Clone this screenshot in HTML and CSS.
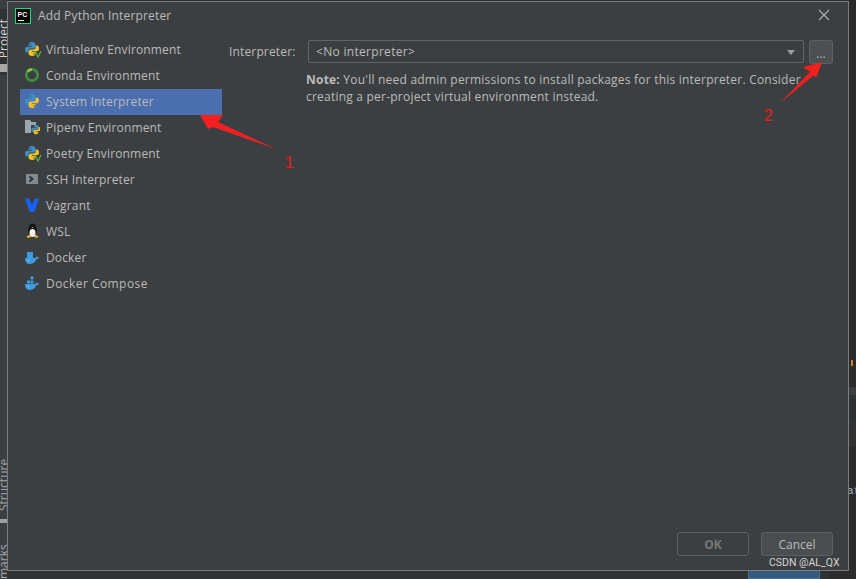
FILE: index.html
```html
<!DOCTYPE html>
<html lang="en">
<head>
<meta charset="utf-8">
<title>Add Python Interpreter</title>
<link rel="stylesheet" href="styles.css">
</head>
<body>
<svg class="defs" width="0" height="0" aria-hidden="true">
  <defs>
    <symbol id="py" viewBox="0 0 16 16">
      <path fill="#3d8fc9" d="M7.800 1C5 1 4.600 2 4.600 3.200V5h3.600v.7H3C1.600 5.700 1 6.900 1 8.500s.7 3 2 3h1.300V9.800c0-1.300 1-2.200 2.300-2.200h3c1 0 1.800-.8 1.800-1.800V3.200C11.400 1.900 10.200 1 7.800 1z"/>
      <circle cx="6" cy="3" r=".7" fill="#2b2b2b"/>
      <path fill="#f2c029" d="M8.200 15c2.800 0 3.200-1 3.200-2.200V11H7.800v-.7H13c1.400 0 2-1.200 2-2.800s-.7-3-2-3h-1.300v1.700c0 1.300-1 2.200-2.300 2.200h-3c-1 0-1.800.8-1.800 1.800v2.600C4.600 14.100 5.800 15 8.200 15z"/>
      <circle cx="10" cy="13" r=".7" fill="#3c3f41"/>
    </symbol>
    <symbol id="whale" viewBox="0 0 16 16">
      <path fill="#3d9be0" d="M1 9h10.500c.3-1 1-1.500 1.700-1.500.2.500.5.800 1.800 1-.4 1-1.400 1.500-2.400 1.600C11.300 13.300 9 15 5.800 15 2.500 15 1 12.500 1 9z"/>
      <circle cx="4.500" cy="11.500" r=".6" fill="#d5e8f5"/>
    </symbol>
  </defs>
</svg>

<div class="screen">
  <aside class="tool-strip">
    <div class="strip-top"></div>
    <div class="strip-dark">
      <span class="side-label">Project</span>
      <span class="strip-folder"></span>
    </div>
    <div class="strip-fill">
      <span class="side-label structure">Structure</span>
      <span class="strip-mark"></span>
      <span class="side-label marks">marks</span>
    </div>
  </aside>

  <div class="middle">
    <section class="dialog">
      <header class="title-bar">
        <svg class="pc-logo" viewBox="0 0 16 16" width="16" height="16" aria-hidden="true">
          <rect x=".5" y=".5" width="15" height="15" fill="#000" stroke="#21d789"/>
          <text x="2.500" y="9" class="pc-text">PC</text>
          <rect x="3" y="12" width="6" height="1" fill="#fff"/>
        </svg>
        <span class="title">Add Python Interpreter</span>
        <svg class="close" viewBox="0 0 12 12" width="12" height="12" aria-hidden="true">
          <path d="M1 1l10 10M11 1L1 11" stroke="#afb1b3" stroke-width="1.100" fill="none"/>
        </svg>
      </header>

      <div class="body">
        <ul class="env-list">
          <li class="env">
            <svg class="icon" width="16" height="16"><use href="#py"/></svg>
            <svg class="badge-v" viewBox="0 0 8 8" width="8" height="8"><path d="M1 1l3 6 3-6" fill="none" stroke="#62b543" stroke-width="1.200"/></svg>
            Virtualenv Environment
          </li>
          <li class="env">
            <svg class="icon" viewBox="0 0 16 16" width="16" height="16"><circle cx="8" cy="8" r="5.700" fill="none" stroke="#3f8f43" stroke-width="2.700"/><path d="M3.500 4.500A5.700 5.700 0 0 1 8 2.300" fill="none" stroke="#8bc34a" stroke-width="2.700"/></svg>
            Conda Environment
          </li>
          <li class="env selected">
            <svg class="icon" width="16" height="16"><use href="#py"/></svg>
            System Interpreter
          </li>
          <li class="env">
            <svg class="icon" viewBox="0 0 16 16" width="16" height="16">
              <path fill="#9aa7b0" d="M1 1h5l1.500 2H12v3H7v8H1z"/>
              <svg x="6.500" y="5" width="11" height="11"><use href="#py"/></svg>
            </svg>
            Pipenv Environment
          </li>
          <li class="env">
            <svg class="icon" width="16" height="16"><use href="#py"/></svg>
            <svg class="badge-v" viewBox="0 0 8 8" width="8" height="8"><path d="M1 1l3 6 3-6" fill="none" stroke="#62b543" stroke-width="1.200"/></svg>
            Poetry Environment
          </li>
          <li class="env">
            <svg class="icon" viewBox="0 0 16 16" width="16" height="16"><rect x="2" y="3" width="12" height="10" fill="#7f8b91"/><path d="M5.500 5.500L8.500 8l-3 2.500" fill="none" stroke="#2b2d2e" stroke-width="1.800"/></svg>
            SSH Interpreter
          </li>
          <li class="env">
            <svg class="icon" viewBox="0 0 16 16" width="16" height="16"><path fill="#1563ff" d="M1 2L4.800 1 8 8.500 11.200 1 15 2l-5 13H6z"/></svg>
            Vagrant
          </li>
          <li class="env">
            <svg class="icon" viewBox="0 0 16 16" width="16" height="16">
              <ellipse cx="8.500" cy="7.500" rx="4.200" ry="7" fill="#141414"/>
              <ellipse cx="8.500" cy="10" rx="3" ry="4" fill="#f4f4f4"/>
              <path fill="#f0b020" d="M7.500 4h2l-1 1.200zM2.500 13.500l3.500-2 1 2.500-3 1zM14.500 13.500l-3.500-2-1 2.500 3 1z"/>
            </svg>
            WSL
          </li>
          <li class="env">
            <svg class="icon" viewBox="0 0 16 16" width="16" height="16">
              <use href="#whale"/>
              <rect x="3" y="3" width="6" height="6" fill="#3d9be0"/>
            </svg>
            Docker
          </li>
          <li class="env wide">
            <svg class="icon" viewBox="0 0 16 16" width="16" height="16">
              <use href="#whale"/>
              <path fill="#3d9be0" d="M6.500 1.500h3v3h-3zM3 5.500h3v3H3zM6.500 5.500h3v3h-3z"/>
            </svg>
            Docker Compose
          </li>
        </ul>

        <div class="panel">
          <div class="field-row">
            <label class="field-label">Interpreter:</label>
            <div class="combo">
              <span>&lt;No interpreter&gt;</span>
              <span class="caret"></span>
            </div>
            <button class="more" type="button">...</button>
          </div>
          <p class="note"><b>Note:</b> You'll need admin permissions to install packages for this interpreter. Consider creating a per-project virtual environment instead.</p>
        </div>
      </div>

      <footer class="actions">
        <button class="btn disabled" type="button">OK</button>
        <button class="btn" type="button">Cancel</button>
      </footer>
    </section>
    <div class="under">
      <span class="under-btn"></span>
    </div>
  </div>

  <aside class="right-strip">
    <span class="r-tick"></span>
    <span class="r-band one"></span>
    <span class="r-band two"></span>
    <span class="r-band three"></span>
    <span class="r-code"><i>a</i><u>t</u></span>
  </aside>

  <svg class="annotations" viewBox="0 0 856 579" width="856" height="579" aria-hidden="true">
    <polygon fill="#f41f1f" points="200,115 223,115 218,122 276,149 213,127 208,129"/>
    <polygon fill="#f41f1f" points="822,62 803,67 810,72 780,103 814,75 816,78"/>
  </svg>
  <span class="mark-num n1">1</span>
  <span class="mark-num n2">2</span>
  <span class="watermark">CSDN @AL_QX</span>
</div>
</body>
</html>
```
FILE: styles.css
```css
* { box-sizing: border-box; }
html, body { margin: 0; padding: 0; }
body {
  width: 856px;
  height: 579px;
  overflow: hidden;
  background: #2b2b2b;
  font-family: "Open Sans", "Noto Sans", sans-serif;
  font-size: 12px;
  color: #bbbbbb;
}
.defs { position: absolute; }
.screen {
  position: relative;
  display: flex;
  width: 856px;
  height: 579px;
  overflow: hidden;
}

/* left tool window strip */
.tool-strip {
  flex: 0 0 7px;
  display: flex;
  flex-direction: column;
  overflow: hidden;
}
.strip-top { height: 10px; background: #3c3f41; }
.strip-dark {
  height: 72px;
  background: #2f3133;
  padding-top: 10px;
  position: relative;
}
.strip-fill {
  flex: 1;
  background: #3c3f41;
  padding-top: 384px;
  display: flex;
  flex-direction: column;
}
.side-label {
  display: block;
  writing-mode: vertical-rl;
  transform: rotate(180deg);
  font-size: 12px;
  line-height: 14px;
  width: 14px;
  margin-left: -3px;
  white-space: nowrap;
  color: #d5d5d5;
}
.structure { color: #a0a4a7; height: 52px; flex: none; }
.marks { color: #a0a4a7; height: 38px; flex: none; margin-top: 18px; }
.strip-folder {
  display: block;
  width: 7px;
  height: 8px;
  margin-top: 6px;
  background: #a7a7a7;
}
.strip-mark {
  display: block;
  flex: none;
  width: 7px;
  height: 4px;
  margin-top: 8px;
  background: #a0a0a0;
}

.middle {
  flex: 0 0 842px;
  display: flex;
  flex-direction: column;
}
.dialog {
  height: 571px;
  margin-top: 1px;
  background: #3c3f41;
  border: 1px solid #7b7d7f;
  display: flex;
  flex-direction: column;
}
.under {
  flex: 1;
  background: linear-gradient(90deg, #303234 822px, #2b2b2b 822px);
  padding-left: 741px;
}
.under-btn {
  display: block;
  width: 72px;
  height: 8px;
  background: #365880;
  border: 1px solid #4c708c;
  border-top: 0;
}

/* title */
.title-bar {
  flex: 0 0 28px;
  display: flex;
  align-items: center;
  padding: 0 18px 0 7px;
}
.pc-logo { flex: none; }
.pc-text { font: 700 7px "Liberation Sans", sans-serif; fill: #fff; }
.title { margin-left: 7px; padding-bottom: 2px; font-size: 12px; letter-spacing: .18px; flex: 1; }
.close { margin-top: -2px; }

/* body */
.body { flex: 1; display: flex; padding: 7px 15px 0 12px; }
.env-list {
  flex: 0 0 202px;
  list-style: none;
  margin: 0;
  padding: 0;
}
.env {
  position: relative;
  height: 26px;
  display: flex;
  align-items: center;
  gap: 6px;
  padding: 0 0 2px 4px;
  letter-spacing: .15px;
  white-space: nowrap;
}
.env.wide { letter-spacing: .45px; }
.env.selected { background: #4b6eaf; }
.icon { flex: none; }
.badge-v { position: absolute; left: 14px; top: 13px; }

.panel { flex: 1; padding: 3px 0 0 7px; min-width: 0; }
.field-row { display: flex; align-items: center; height: 23px; }
.field-label { flex: 0 0 79px; letter-spacing: .15px; }
.combo {
  flex: 1;
  height: 23px;
  display: flex;
  align-items: center;
  justify-content: space-between;
  padding: 0 7px 0 7px;
  border: 1px solid #646464;
  border-radius: 2px;
  background: #3c3f41;
  letter-spacing: .3px;
}
.caret {
  width: 0;
  height: 0;
  margin: 1px 1px 0 0;
  border-left: 4.500px solid transparent;
  border-right: 4.500px solid transparent;
  border-top: 5px solid #9b9d9f;
}
.more {
  flex: 0 0 24px;
  height: 24px;
  margin-left: 5px;
  padding: 4px 0 0;
  border: 1px solid #5e6060;
  border-radius: 3px;
  background: #4c5052;
  color: #bbbbbb;
  font: 12px "Open Sans", sans-serif;
}
.note {
  margin: 8px 0 0 77px;
  width: 515px;
  line-height: 17px;
  letter-spacing: .22px;
}
.note b { font-weight: 700; }

/* footer */
.actions {
  display: flex;
  justify-content: flex-end;
  gap: 12px;
  padding: 0 15px 14px 0;
}
.btn {
  width: 72px;
  height: 24px;
  padding: 0;
  border: 1px solid #5e6060;
  border-radius: 3px;
  background: #4a4e50;
  color: #bbbbbb;
  font: 12px "Open Sans", sans-serif;
}
.btn.disabled {
  background: transparent;
  color: #777777;
  font-weight: 700;
}

/* right strip */
.right-strip {
  flex: 1;
  background: #2b2b2b;
  padding-top: 360px;
  display: flex;
  flex-direction: column;
  overflow: hidden;
}
.r-tick { display: block; width: 2px; height: 6px; margin-left: 2px; background: #cc7832; }
.r-band { display: block; }
.r-band.one { height: 8px; margin-top: 21px; background: #3c3c3c; }
.r-band.two { height: 25px; background: #2e3133; }
.r-band.three { height: 27px; background: #323232; }
.r-code {
  display: block;
  margin: 38px 0 0 -2px;
  font: 11px "Liberation Mono", monospace;
  line-height: 12px;
  white-space: nowrap;
}
.r-code i { font-style: normal; color: #a9b7c6; }
.r-code u { text-decoration: none; color: #6897bb; }

/* overlays */
.annotations { position: absolute; left: 0; top: 0; pointer-events: none; }
.mark-num {
  position: absolute;
  color: #e81c1c;
  font: 16px "Liberation Sans", sans-serif;
}
.n1 { left: 285px; top: 154px; }
.n2 { left: 764px; top: 107px; }
.watermark {
  position: absolute;
  left: 769px;
  top: 556px;
  font: 10.500px/14px Roboto, "Liberation Sans", sans-serif;
  color: #d4d4d4;
}
```
